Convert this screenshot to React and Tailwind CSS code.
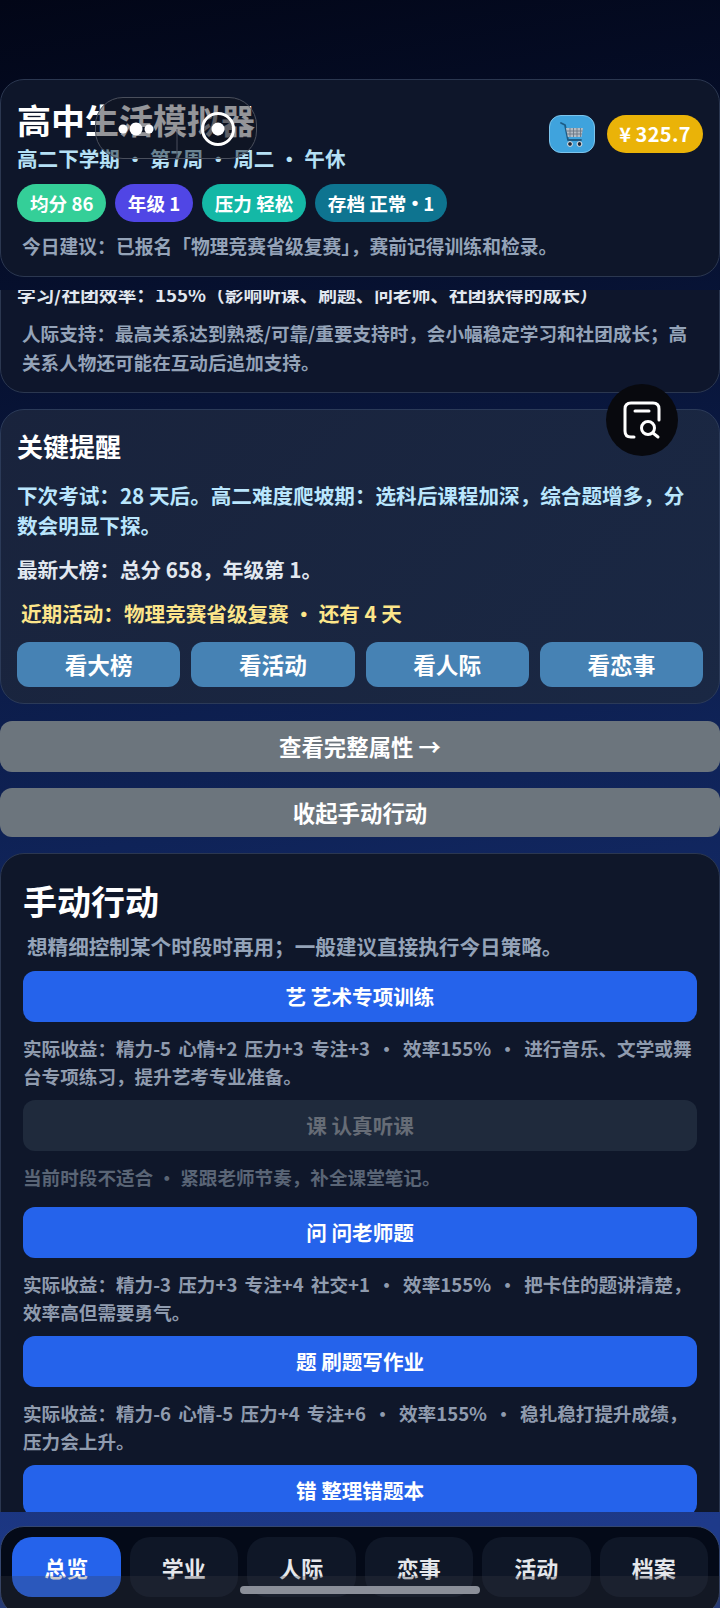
const FONT = '"Noto Sans CJK SC","Noto Sans",sans-serif';

function Cart() {
  return (
    <svg width="26" height="26" viewBox="0 0 26 26" fill="none">
      <path d="M2 2 L6 4 L9 19 H22" stroke="#1d5c86" strokeWidth="1.8" strokeLinecap="round" strokeLinejoin="round" />
      <path d="M7 7 H24 L22.5 16 H8.8 Z" fill="#b4bdc6" />
      <path d="M11 7 V16 M14.5 7 V16 M18 7 V16 M21.5 7 V16 M7.5 10 H23.5 M8 13 H23" stroke="#6b7784" strokeWidth="0.9" />
      <circle cx="11" cy="23" r="2.4" fill="#1f2937" stroke="#e5e7eb" strokeWidth="1" />
      <circle cx="20.5" cy="23" r="2.4" fill="#1f2937" stroke="#e5e7eb" strokeWidth="1" />
    </svg>
  );
}

function Pill({ className, children }) {
  return (
    <span className={`h-[38px] px-[13px] rounded-full flex items-center text-[18.6px] font-bold text-white whitespace-pre ${className}`}>
      {children}
    </span>
  );
}

function Action({ label, disabled, mt, desc }) {
  return (
    <>
      <div
        className={`h-[51px] rounded-xl flex items-center justify-center text-[20.6px] font-bold ${
          disabled ? 'bg-[#1f2a3c] text-[#666c76]' : 'bg-[#2563eb] text-white'
        } ${mt}`}
      >
        {label}
      </div>
      {desc && (
        <p className={`mt-[12px] text-[18.6px] leading-[28px] font-bold ${disabled ? 'text-[#5a6576]' : 'text-[#8f9bae] [word-spacing:3px]'}`}>{desc}</p>
      )}
    </>
  );
}

const tabs = ['总览', '学业', '人际', '恋事', '活动', '档案'];

export default function App() {
  return (
    <div
      className="relative w-[720px] h-[1608px] overflow-hidden flex flex-col bg-[linear-gradient(170deg,#020617_0%,#071233_22%,#0f2358_50%,#1e3a8a_95%)]"
      style={{ fontFamily: FONT }}
    >
      {/* fixed header */}
      <header className="h-[290px] shrink-0 pt-[79px]">
        <div className="h-[198px] rounded-[24px] border border-[#2b3750] bg-[#0e162a] px-[16px] pt-[18px]">
          <div className="flex justify-between">
            <div>
              <h1 className="text-[34px] leading-[44px] font-bold text-white">高中生活模拟器</h1>
              <p className="mt-[2px] text-[20.6px] leading-[28px] font-bold text-[#b5e0f5] whitespace-pre">高二下学期 · 第7周 · 周二 · 午休</p>
            </div>
            <div className="flex gap-[12px] mt-[17px]">
              <div className="w-[46px] h-[38px] rounded-xl bg-[#3fa3dd] border border-[#7cc4ec] flex items-center justify-center">
                <Cart />
              </div>
              <div className="w-[96px] h-[38px] rounded-full bg-[#eab308] text-white font-bold text-[20px] tracking-[0.3px] flex items-center justify-center whitespace-pre">
                {'¥\u2009325.7'}
              </div>
            </div>
          </div>
          <div className="mt-[12px] flex gap-[8.5px]">
            <Pill className="bg-[#34cf98]">均分 86</Pill>
            <Pill className="bg-[#5046e5]">年级 1</Pill>
            <Pill className="bg-[#14b8a6]">压力 轻松</Pill>
            <Pill className="bg-[#0e7490]">存档 正常<span className="font-['Liberation_Sans']"> • </span>1</Pill>
          </div>
          <p className="mt-[10px] ml-[5px] text-[18.8px] leading-[28px] font-bold text-[#94a3b8]">
            {'今日建议\uFF1A已报名「物理竞赛省级复赛」\uFF0C赛前记得训练和检录。'}
          </p>
        </div>
      </header>

      {/* scrolled content */}
      <main className="flex-1 min-h-0 overflow-hidden">
        <section className="-mt-[25px] h-[128px] rounded-[24px] border border-[#2b3750] bg-[#0e162c] px-[16px] pt-[14px]">
          <p className="text-[18.7px] leading-[28px] font-bold text-[#e2e8f0] whitespace-nowrap">
            {'学习/社团效率\uFF1A155%\uFF08影响听课、刷题、问老师、社团获得的成长\uFF09'}
          </p>
          <p className="mt-[11px] ml-[5px] text-[18.6px] leading-[28.5px] font-bold text-[#94a3b8]">
            {'人际支持\uFF1A最高关系达到熟悉/可靠/重要支持时\uFF0C会小幅稳定学习和社团成长\uFF1B高关系人物还可能在互动后追加支持。'}
          </p>
        </section>

        <section className="mt-[16px] h-[295px] rounded-[24px] border border-[#2b3a58] bg-[linear-gradient(135deg,#19233c,#1a2844)] px-[16px] pt-[18px]">
          <h2 className="text-[26px] leading-[36px] font-bold text-white">关键提醒</h2>
          <p className="mt-[16px] text-[20.6px] leading-[30px] font-bold text-[#bae6fd]">
            {'下次考试\uFF1A28 天后。高二难度爬坡期\uFF1A选科后课程加深\uFF0C综合题增多\uFF0C分数会明显下探。'}
          </p>
          <p className="mt-[14px] text-[20.6px] leading-[31px] font-bold text-[#e2e8f0]">{'最新大榜\uFF1A总分 658\uFF0C年级第 1。'}</p>
          <p className="mt-[13px] ml-[4px] text-[20.6px] leading-[31px] font-bold text-[#fde68a] whitespace-pre">{'近期活动\uFF1A物理竞赛省级复赛 · 还有 4 天'}</p>
          <div className="mt-[13px] grid grid-cols-4 gap-[11px]">
            {['看大榜', '看活动', '看人际', '看恋事'].map((t) => (
              <div key={t} className="h-[45px] rounded-xl bg-[#4682b4] text-white text-[22.6px] font-bold flex items-center justify-center">
                {t}
              </div>
            ))}
          </div>
        </section>

        <div className="mt-[17px] h-[51px] rounded-xl bg-[#6c757d] text-white text-[22.4px] font-bold flex items-center justify-center">
          查看完整属性 →
        </div>
        <div className="mt-[16px] h-[49px] rounded-xl bg-[#6c757d] text-white text-[22.4px] font-bold flex items-center justify-center">
          收起手动行动
        </div>

        <section className="mt-[16px] rounded-[24px] border border-[#2b3750] bg-[#0f172a] px-[22px] pt-[24px] pb-[40px]">
          <h2 className="text-[34px] leading-[46px] font-bold text-white">手动行动</h2>
          <p className="mt-[7px] ml-[4px] text-[20.6px] leading-[30px] font-bold text-[#94a3b8]">
            {'想精细控制某个时段时再用\uFF1B一般建议直接执行今日策略。'}
          </p>
          <Action
            mt="mt-[10px]"
            label="艺 艺术专项训练"
            desc={'实际收益\uFF1A精力-5 心情+2 压力+3 专注+3 · 效率155% · 进行音乐、文学或舞台专项练习\uFF0C提升艺考专业准备。'}
          />
          <Action
            mt="mt-[10px]"
            disabled
            label="课 认真听课"
            desc={'当前时段不适合 · 紧跟老师节奏\uFF0C补全课堂笔记。'}
          />
          <Action
            mt="mt-[16px]"
            label="问 问老师题"
            desc={'实际收益\uFF1A精力-3 压力+3 专注+4 社交+1 · 效率155% · 把卡住的题讲清楚\uFF0C效率高但需要勇气。'}
          />
          <Action
            mt="mt-[10px]"
            label="题 刷题写作业"
            desc={'实际收益\uFF1A精力-6 心情-5 压力+4 专注+6 · 效率155% · 稳扎稳打提升成绩\uFF0C压力会上升。'}
          />
          <Action mt="mt-[10px]" label="错 整理错题本" />
        </section>
      </main>

      {/* bottom nav */}
      <footer className="h-[96px] shrink-0 pt-[14px]">
        <nav className="h-[90px] rounded-[24px] border border-[#34466f] bg-[#040a18] px-[11px] pt-[10px] flex gap-[9px]">
          {tabs.map((t, i) => (
            <div
              key={t}
              className={`flex-1 h-[60px] rounded-[20px] flex items-center justify-center text-[22px] font-bold ${
                i === 0 ? 'bg-[#2563eb] text-white' : 'bg-[#0f1727] text-[#e5e7eb]'
              }`}
            >
              {t}
            </div>
          ))}
        </nav>
      </footer>

      {/* system overlays */}
      <div className="absolute left-0 right-0 bottom-0 h-[32px] bg-[rgba(60,60,70,0.28)]" />
      <div className="absolute left-[240px] bottom-[14px] w-[240px] h-[8px] rounded-full bg-[#8b8f99]" />

      {/* recording pill */}
      <div className="absolute left-[95px] top-[97px] w-[162px] h-[62px] rounded-[28px] border border-[#4a4f5c] bg-[rgba(18,20,28,0.45)]">
        <svg width="162" height="62" viewBox="0 0 162 62" className="absolute inset-0">
          <line x1="81" y1="31" x2="81" y2="62" stroke="#4a4f5c" strokeWidth="1" />
          <circle cx="27" cy="31" r="4.5" fill="#fff" />
          <circle cx="40" cy="31" r="6.5" fill="#fff" />
          <circle cx="53" cy="31" r="4.5" fill="#fff" />
          <circle cx="122" cy="31" r="15.5" fill="rgba(10,12,20,0.4)" stroke="#fff" strokeWidth="3" />
          <circle cx="122" cy="31" r="6.5" fill="#fff" />
        </svg>
      </div>

      {/* floating search */}
      <div className="absolute left-[606px] top-[384px] w-[72px] h-[72px] rounded-full bg-[#08090e] flex items-center justify-center">
        <svg width="40" height="40" viewBox="0 0 40 40" fill="none" stroke="#fff" strokeWidth="3" strokeLinecap="round" strokeLinejoin="round">
          <path d="M12 37 H9 Q3 37 3 31 V9 Q3 3 9 3 H31 Q37 3 37 9 V20" />
          <line x1="13" y1="11" x2="27" y2="11" />
          <circle cx="26" cy="28" r="6.5" />
          <line x1="31" y1="33" x2="36" y2="37" />
        </svg>
      </div>
    </div>
  );
}
